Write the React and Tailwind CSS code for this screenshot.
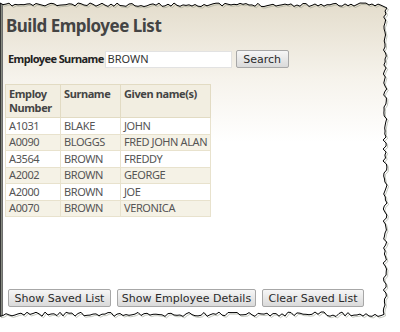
import React from 'react';

const rows = [
  ['A1031', 'BLAKE', 'JOHN'],
  ['A0090', 'BLOGGS', 'FRED JOHN ALAN'],
  ['A3564', 'BROWN', 'FREDDY'],
  ['A2002', 'BROWN', 'GEORGE'],
  ['A2000', 'BROWN', 'JOE'],
  ['A0070', 'BROWN', 'VERONICA'],
];

// small seeded random so the torn edge is the same every run
function makeRand(seed) {
  let s = seed;
  return () => {
    s = (s * 16807) % 2147483647;
    return (s - 1) / 2147483646;
  };
}

function tornPath() {
  const r = makeRand(11);
  const pts = [];
  for (let x = 0; x <= 383; x += 3) pts.push([x, 3 + r() * 3.5]);
  for (let y = 8; y <= 312; y += 3) pts.push([383 + r() * 4, y]);
  for (let x = 384; x >= 0; x -= 3) pts.push([x, 312 + r() * 4.5]);
  return 'M' + pts.map(([x, y]) => `${x.toFixed(1)} ${y.toFixed(1)}`).join('L') + 'Z';
}

function TornEdge() {
  const d = tornPath();
  return (
    <svg className="absolute inset-0 pointer-events-none" width="400" height="332" viewBox="0 0 400 332">
      <path d={`M-2 -2H402V334H-2Z ${d}`} fill="#ffffff" fillRule="evenodd" />
      <path d={d} transform="translate(1.5 1.5)" fill="none" stroke="#9aa08f" strokeWidth="1" opacity="0.6" />
      <path d={d} fill="none" stroke="#000000" strokeWidth="1" />
    </svg>
  );
}

function Button({ children, className = '' }) {
  return (
    <button
      className={`h-[18px] border border-[#a7a7a7] rounded-[2px] bg-gradient-to-b from-[#f6f6f6] to-[#dadada] text-[11px] leading-none text-[#2a2a2a] font-['DejaVu_Sans',sans-serif] ${className}`}
    >
      {children}
    </button>
  );
}

export default function App() {
  return (
    <div className="relative w-[400px] h-[332px] bg-white overflow-hidden">
      <div className="w-[386px] h-[316px] border-l-[3px] border-[#6e6e6e] bg-gradient-to-b from-[#e3dccb] via-[#f6f3ec] via-25% to-white to-45% flex flex-col font-['Noto_Sans',sans-serif] text-[#444]">
        <h1 className="mt-[16px] ml-[3px] text-[17px] font-bold leading-[20px] tracking-[-0.5px] text-[#444]">Build Employee List</h1>

        <div className="mt-[14px] ml-[5px] flex items-center">
          <span className="text-[11px] font-bold tracking-[-0.6px] text-[#222]">Employee Surname</span>
          <div className="ml-[1px] w-[127px] h-[17px] bg-white border border-[#e2e2e2] flex items-center pl-[2px] text-[11px] text-[#333]">
            BROWN
          </div>
          <Button className="ml-[4px] w-[53px]">Search</Button>
        </div>

        <table className="mt-[16px] ml-[2px] w-[206px] table-fixed border-collapse text-[11px] tracking-[-0.4px] text-[#555]">
          <thead>
            <tr className="bg-[#f2eee1] h-[33px]">
              <th className="w-[55px] border border-[#e2dbc3] text-left align-top px-[3px] pt-[2px] font-bold leading-[14px] text-[#444]">Employ Number</th>
              <th className="w-[60px] border border-[#e2dbc3] text-left align-top px-[3px] pt-[2px] font-bold leading-[14px] text-[#444]">Surname</th>
              <th className="border border-[#e2dbc3] text-left align-top px-[3px] pt-[2px] font-bold leading-[14px] text-[#444]">Given name(s)</th>
            </tr>
          </thead>
          <tbody>
            {rows.map((r, i) => (
              <tr key={r[0]} className={`h-[16.5px] ${i % 2 ? 'bg-[#f5f2e6]' : 'bg-white'}`}>
                {r.map((c, j) => (
                  <td key={j} className="border border-[#e8e2cd] px-[3px] leading-[14px] whitespace-nowrap overflow-hidden">{c}</td>
                ))}
              </tr>
            ))}
          </tbody>
        </table>

        <div className="mt-auto mb-[9px] ml-[5px] flex gap-[6px]">
          <Button className="w-[103px]">Show Saved List</Button>
          <Button className="w-[139px]">Show Employee Details</Button>
          <Button className="w-[102px]">Clear Saved List</Button>
        </div>
      </div>
      <TornEdge />
    </div>
  );
}
